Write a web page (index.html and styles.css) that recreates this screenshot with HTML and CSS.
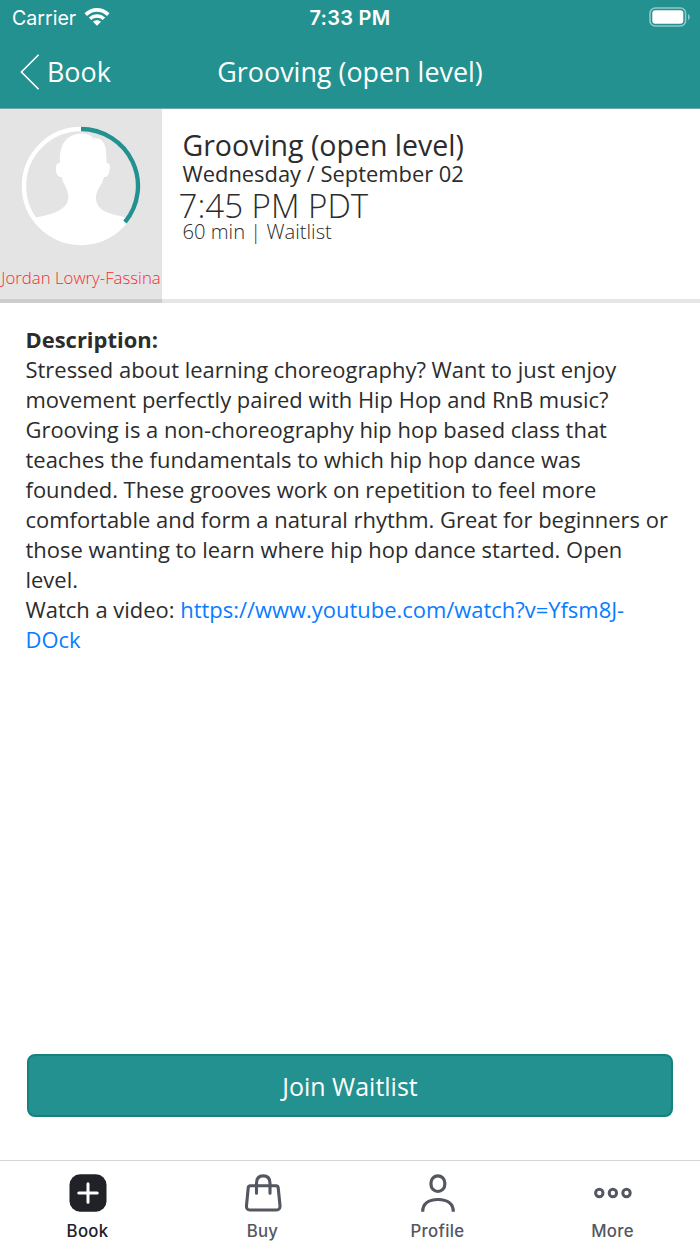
FILE: index.html
```html
<!DOCTYPE html>
<html lang="en">
<head>
<meta charset="utf-8">
<title>Grooving (open level)</title>
<link rel="stylesheet" href="styles.css">
</head>
<body>
<div class="app">
  <header class="header">
    <div class="status">
      <div class="carrier"><span class="carrier-name">Carrier</span>
        <svg class="wifi" viewBox="0 0 26 19" width="26" height="19">
          <path d="M0.5 6.3C7.5 -0.8 18.5 -0.8 25.5 6.3L23 8.9C17.3 3.2 8.7 3.2 3 8.9Z"/>
          <path d="M4.8 10.6C9.4 6.1 16.6 6.1 21.2 10.6L18.7 13.1C15.4 10 10.6 10 7.3 13.1Z"/>
          <path d="M9 14.8C11.3 12.8 14.7 12.8 17 14.8L13 18.8Z"/>
        </svg>
      </div>
      <div class="clock">7:33 PM</div>
      <svg class="battery" viewBox="0 0 42 20" width="42" height="20">
        <rect x="1" y="1" width="35.6" height="18" rx="5.3" fill="none" stroke="#fff" stroke-opacity=".5" stroke-width="1.6"/>
        <rect x="3.3" y="3.3" width="31" height="13.4" rx="3" fill="#fff"/>
        <path d="M39 7C41.3 8 41.3 12 39 13Z" fill="#fff" fill-opacity=".5"/>
      </svg>
    </div>
    <nav class="navbar">
      <a class="back">
        <svg viewBox="0 0 20 38" width="20" height="38"><path d="M18.6 1.7L1.4 19L18.6 36.3" fill="none" stroke="#fff" stroke-width="1.6"/></svg>
        <span class="back-label">Book</span>
      </a>
      <h1 class="title">Grooving (open level)</h1>
    </nav>
  </header>

  <section class="summary">
    <div class="teacher">
      <svg class="avatar" viewBox="0 0 120 120" width="120" height="120">
        <clipPath id="disc"><circle cx="60" cy="60" r="58"/></clipPath>
        <circle cx="60" cy="60" r="57" fill="none" stroke="#fff" stroke-width="4.4"/>
        <path clip-path="url(#disc)" fill="#fff" d="M60 7.500C66 7.500 70.500 9 72.300 12.500C80 10.500 84.500 17 85 25L85.700 37C89 37 89.500 40 88.500 44C88 49 86 51.500 83 51C81 60 75 63 75 72C75 86 91 88 107 92L112 120H8L14 91.500C30 89 47 84 47.300 72C47.600 63 43 60 40.500 51C36 51.500 34.500 46 35 42C35.100 39 36 37 39 37C38.500 31 39 24 42 18C46 11 53 7.500 60 7.500Z"/>
        <path d="M60 3A57 57 0 0 1 104 96.200" fill="none" stroke="#23918f" stroke-width="4.400"/>
      </svg>
      <div class="teacher-name">Jordan Lowry-Fassina</div>
    </div>
    <div class="details">
      <div class="class-name">Grooving (open level)</div>
      <div class="date">Wednesday / September 02</div>
      <div class="time">7:45 PM PDT</div>
      <div class="meta">60 min | Waitlist</div>
    </div>
  </section>

  <main class="description">
    <strong>Description:</strong><br>
    Stressed about learning choreography? Want to just enjoy<br>
    movement perfectly paired with Hip Hop and RnB music?<br>
    Grooving is a non-choreography hip hop based class that<br>
    teaches the fundamentals to which hip hop dance was<br>
    founded. These grooves work on repetition to feel more<br>
    comfortable and form a natural rhythm. Great for beginners or<br>
    those wanting to learn where hip hop dance started. Open<br>
    level.<br>
    Watch a video: <a class="link">https://www.youtube.com/watch?v=Yfsm8J-<br>DOck</a>
  </main>

  <button class="join">Join Waitlist</button>

  <footer class="tabs">
    <div class="tab active">
      <svg viewBox="0 0 40 40" width="40" height="40"><rect x="1.500" y="1.300" width="37" height="37.400" rx="10.500" fill="#202227"/><path d="M20 10.800V29.200M10.800 20H29.200" stroke="#fff" stroke-width="3" stroke-linecap="round"/></svg>
      <span>Book</span>
    </div>
    <div class="tab">
      <svg viewBox="0 0 40 40" width="40" height="40" fill="none" stroke="#545660" stroke-width="3.100" stroke-linecap="round" stroke-linejoin="round"><path d="M7.500 12.800H33C34.500 12.800 35 13.500 35.200 14.800L37 32.500C37.300 35.500 35.800 37 33.500 37H7C4.500 37 3.200 35.500 3.500 32.500L5.200 14.800C5.400 13.500 6 12.800 7.500 12.800Z"/><path d="M13.500 20.200V10.200C13.500 5.500 16 2.900 20.200 2.900S27 5.500 27 10.200V20.200"/></svg>
      <span>Buy</span>
    </div>
    <div class="tab">
      <svg viewBox="0 0 40 40" width="40" height="40" fill="none" stroke="#545660" stroke-width="3.200"><rect x="13" y="2.900" width="13.800" height="15.600" rx="6.900"/><path d="M4.700 38.700C4.700 31 10 26.500 20 26.500S35.300 31 35.300 38.700"/></svg>
      <span>Profile</span>
    </div>
    <div class="tab">
      <svg viewBox="0 0 40 40" width="40" height="40" fill="none" stroke="#545660" stroke-width="3"><circle cx="6.300" cy="20" r="3.700"/><circle cx="19.900" cy="20" r="3.700"/><circle cx="33.500" cy="20" r="3.700"/></svg>
      <span>More</span>
    </div>
  </footer>
</div>
</body>
</html>
```

FILE: styles.css
```css
* { box-sizing: border-box; }
body { margin: 0; background: #fff; font-family: "Open Sans", "Noto Sans", sans-serif; color: #2c2c2c; }
.app { width: 700px; height: 1244px; display: flex; flex-direction: column; overflow: hidden; }
.header { height: 109px; background: #23918f; color: #fff; border-bottom: 1px solid #70a9a8; }
.status { height: 36px; padding: 0 9px 0 12px; display: grid; grid-template-columns: 1fr auto 1fr; align-items: center; font-family: Inter, sans-serif; font-size: 20px; line-height: 36px; }
.carrier { display: flex; align-items: center; gap: 8px; }
.carrier-name { font-size: 19.6px; }
.wifi { fill: #fff; margin-top: -3px; }
.clock { font-weight: 600; letter-spacing: 0.3px; margin-left: -3px; }
.battery { justify-self: end; margin-top: -2px; }
.navbar { height: 72px; padding: 0 20px; display: grid; grid-template-columns: 1fr auto 1fr; align-items: center; }
.back { display: flex; align-items: center; gap: 7px; font-size: 26.9px; line-height: 38px; }
.title { margin: 0; font-size: 26.9px; font-weight: 400; line-height: 38px; white-space: nowrap; }
.summary { height: 194px; display: flex; border-bottom: 4px solid #e6e6e6; }
.teacher { width: 162px; height: 194px; padding-top: 17px; background: #e4e4e4; border-bottom: 4px solid #cdcdcd; display: flex; flex-direction: column; align-items: center; }
.teacher-name { margin-top: 20px; font-size: 16.8px; font-weight: 300; line-height: 24px; color: #f52b30; white-space: nowrap; }
.details { padding: 18px 0 0 20.5px; white-space: nowrap; }
.class-name { font-size: 28.5px; line-height: 37px; }
.date { font-size: 21.9px; line-height: 19px; }
.time { margin-left: -4px; font-size: 33.1px; font-weight: 300; line-height: 45px; }
.meta { font-size: 20.2px; font-weight: 300; line-height: 7px; }
.description { flex: 1; padding: 22px 25.5px; font-size: 21.95px; line-height: 29.95px; white-space: nowrap; }
.link { color: #087cff; }
.join { height: 63px; margin: 0 27px 43px; padding-top: 2px; border: 2px solid #15827e; border-radius: 8px; background: #23918f; color: #fff; font: 400 25px/1 "Open Sans", sans-serif; }
.tabs { height: 84px; border-top: 1px solid #d4d4d4; display: grid; grid-template-columns: repeat(4, 175px); }
.tab { padding-top: 12px; display: flex; flex-direction: column; align-items: center; gap: 7px; font: 500 16.8px/22px Inter, sans-serif; letter-spacing: 0.3px; color: #545660; }
.active { color: #202227; }
```
